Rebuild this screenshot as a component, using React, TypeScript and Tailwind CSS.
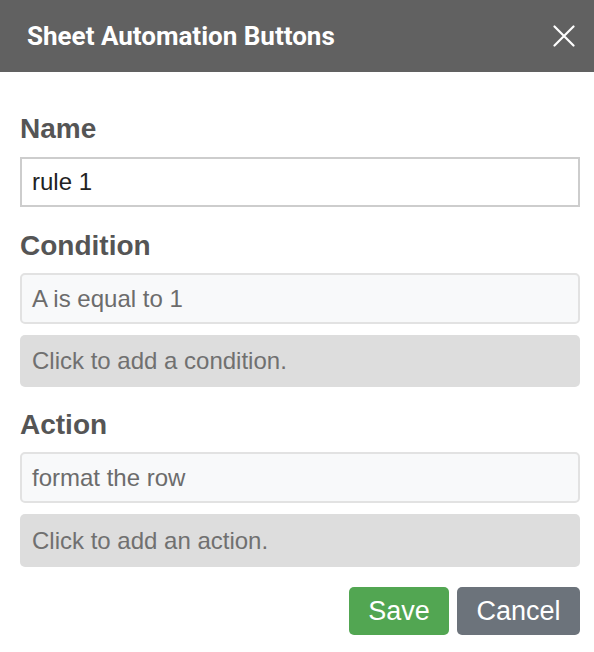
const Label = ({ children, className = "" }: { children: React.ReactNode; className?: string }) => (
  <div className={`text-[28px] font-bold leading-[31px] text-[#555555] ${className}`}>{children}</div>
);

export default function App() {
  return (
    <div className="w-[594px] h-[652px] bg-white font-['Liberation_Sans',Arial,sans-serif]">
      {/* Title bar */}
      <div className="h-[72px] bg-[#616161] flex items-center justify-between pl-[27px] pr-[19px]">
        <h1 className="text-white font-['Roboto',sans-serif] font-bold text-[26px] leading-none">Sheet Automation Buttons</h1>
        <button className="text-white">
          <svg width="22" height="22" viewBox="0 0 22 22" fill="none" stroke="currentColor" strokeWidth="2.2" strokeLinecap="round">
            <path d="M1.5 1.5L20.5 20.5M20.5 1.5L1.5 20.5" />
          </svg>
        </button>
      </div>

      <div className="pl-[20px] pr-[14px] pt-[41px]">
        <Label className="mb-[13px]">Name</Label>
        <div className="h-[50px] border-2 border-[#cdcdcd] flex items-center px-[10px] text-[24px] text-[#222222]">
          rule 1
        </div>

        <Label className="mt-[23px] mb-[12px]">Condition</Label>
        <div className="h-[51px] rounded-[5px] border-2 border-[#e2e2e2] bg-[#f8f9fa] flex items-center px-[10px] text-[24px] text-[#6c6c6c]">
          A is equal to 1
        </div>
        <div className="mt-[11px] h-[52px] rounded-[5px] bg-[#dddddd] flex items-center px-[12px] text-[24px] text-[#707070]">
          Click to add a condition.
        </div>

        <Label className="mt-[22px] mb-[12px]">Action</Label>
        <div className="h-[51px] rounded-[5px] border-2 border-[#e2e2e2] bg-[#f8f9fa] flex items-center px-[10px] text-[24px] text-[#6c6c6c]">
          format the row
        </div>
        <div className="mt-[11px] h-[53px] rounded-[5px] bg-[#dddddd] flex items-center px-[12px] text-[24px] text-[#707070]">
          Click to add an action.
        </div>

        <div className="mt-[20px] flex justify-end gap-[8px]">
          <button className="h-[48px] w-[100px] rounded-[5px] bg-[#52a652] text-white text-[27px]">Save</button>
          <button className="h-[48px] w-[123px] rounded-[5px] bg-[#6c737b] text-white text-[27px]">Cancel</button>
        </div>
      </div>
    </div>
  );
}
